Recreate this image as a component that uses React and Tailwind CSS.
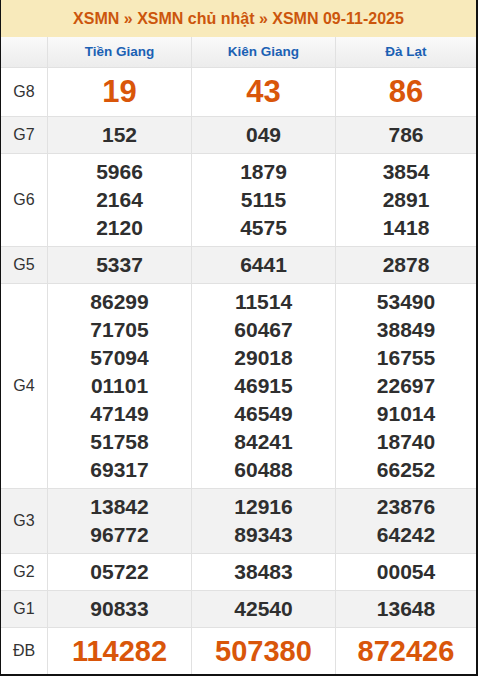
const provinces = ["Tiền Giang", "Kiên Giang", "Đà Lạt"];

const rows = [
  { label: "G8", big: true, h: "h-[49px]", values: [["19"], ["43"], ["86"]] },
  { label: "G7", gray: true, values: [["152"], ["049"], ["786"]] },
  {
    label: "G6",
    values: [
      ["5966", "2164", "2120"],
      ["1879", "5115", "4575"],
      ["3854", "2891", "1418"],
    ],
  },
  { label: "G5", gray: true, values: [["5337"], ["6441"], ["2878"]] },
  {
    label: "G4",
    values: [
      ["86299", "71705", "57094", "01101", "47149", "51758", "69317"],
      ["11514", "60467", "29018", "46915", "46549", "84241", "60488"],
      ["53490", "38849", "16755", "22697", "91014", "18740", "66252"],
    ],
  },
  {
    label: "G3",
    gray: true,
    values: [
      ["13842", "96772"],
      ["12916", "89343"],
      ["23876", "64242"],
    ],
  },
  { label: "G2", values: [["05722"], ["38483"], ["00054"]] },
  { label: "G1", gray: true, values: [["90833"], ["42540"], ["13648"]] },
  { label: "ĐB", special: true, h: "h-[46px]", last: true, values: [["114282"], ["507380"], ["872426"]] },
];

function Row({ row }) {
  const bg = row.gray ? "bg-[#f2f2f2]" : "bg-white";
  const border = row.last ? "" : "border-b border-[#e1e1e1]";
  let numClass = "text-[21px] leading-[28px] text-[#2f2f2f] py-1";
  if (row.big) numClass = "text-[31px] leading-[48px] text-[#d9560a]";
  if (row.special) numClass = "text-[29px] leading-[46px] text-[#d9560a]";

  return (
    <div className={`grid grid-cols-[46px_144px_144px_1fr] ${bg} ${border} ${row.h || ""}`}>
      <div className="flex items-center justify-center text-[16px] text-[#333]">{row.label}</div>
      {row.values.map((col, i) => (
        <div
          key={i}
          className={`flex flex-col items-center justify-center border-l border-[#e1e1e1] font-bold ${numClass}`}
        >
          {col.map((n) => (
            <span key={n}>{n}</span>
          ))}
        </div>
      ))}
    </div>
  );
}

export default function App() {
  return (
    <div className="bg-white" style={{ fontFamily: '"Liberation Sans", Arial, sans-serif' }}>
      <div className="w-[478px] border-l border-r-2 border-b-2 border-[#111]">
        <div className="h-[37px] flex items-center justify-center bg-[#f8eabb] text-[16px] font-bold text-[#cc560c]">
          XSMN » XSMN chủ nhật » XSMN 09-11-2025
        </div>
        <div className="grid grid-cols-[46px_144px_144px_1fr] h-[31px] bg-linear-to-b from-[#fafafa] to-[#ececec] border-b border-[#e1e1e1]">
          <div></div>
          {provinces.map((p) => (
            <div
              key={p}
              className="flex items-center justify-center border-l border-[#e1e1e1] text-[13.5px] font-bold text-[#1b61b4]"
            >
              {p}
            </div>
          ))}
        </div>
        {rows.map((r) => (
          <Row key={r.label} row={r} />
        ))}
      </div>
    </div>
  );
}
